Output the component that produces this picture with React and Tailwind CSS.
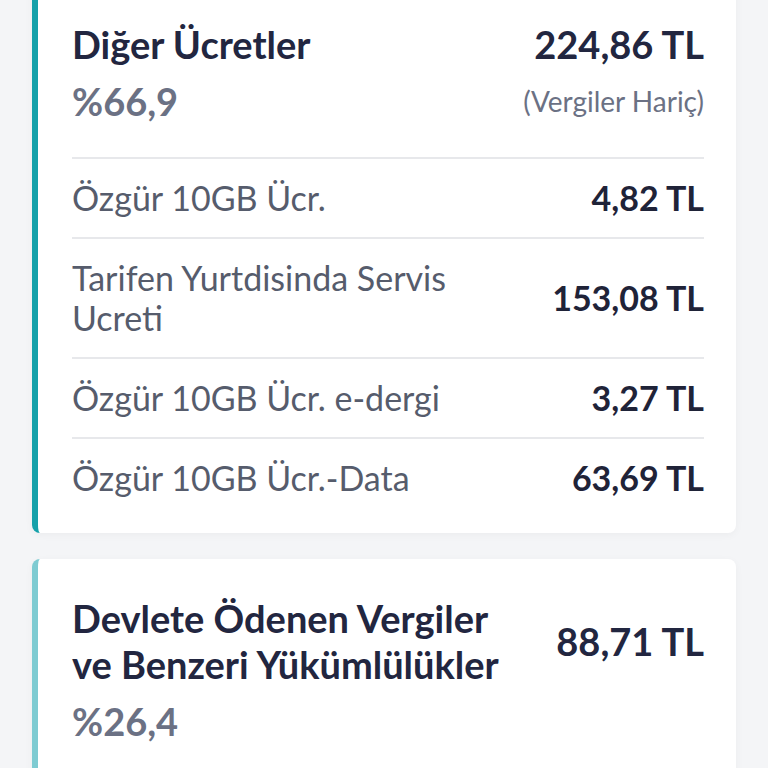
export default function App() {
  const rows = [
    { label: "Özgür 10GB Ücr.", value: "4,82 TL" },
    { label: "Tarifen Yurtdisinda Servis Ucreti", value: "153,08 TL" },
    { label: "Özgür 10GB Ücr. e-dergi", value: "3,27 TL" },
    { label: "Özgür 10GB Ücr.-Data", value: "63,69 TL" },
  ];
  return (
    <div
      className="min-h-[768px] h-[768px] overflow-hidden bg-[#f4f5f7] px-8"
      style={{ fontFamily: "Lato, 'Noto Sans', sans-serif" }}
    >
      <div className="-mt-[15px] rounded-lg border-l-[6px] border-[#15a1aa] bg-white pl-[34px] pr-8 pt-9 pb-4 shadow-[0_2px_8px_rgba(0,0,0,0.04)]">
        <div className="flex items-center justify-between">
          <div className="text-[38px] font-bold leading-[46px] text-[#222640]">Diğer Ücretler</div>
          <div className="text-[38px] font-bold leading-[46px] text-[#222640]">224,86 TL</div>
        </div>
        <div className="mt-3 flex items-center justify-between">
          <div className="text-[38px] font-bold leading-[44px] text-[#6b7184]">%66,9</div>
          <div className="text-[28px] leading-[44px] text-[#6b7184]">(Vergiler Hariç)</div>
        </div>
        <div className="mt-[34px]">
          {rows.map((r) => (
            <div key={r.label}>
              <div className="h-[2px] bg-[#e7e8eb]" />
              <div className="flex items-center justify-between gap-10 py-[19px]">
                <div className="flex-1 text-[34px] leading-[40px] text-[#565c6c]">{r.label}</div>
                <div className="shrink-0 text-[34px] font-bold leading-[40px] text-[#1f2338]">{r.value}</div>
              </div>
            </div>
          ))}
        </div>
      </div>
      <div className="mt-[26px] rounded-lg border-l-[6px] border-[#7ecbd2] bg-white pl-[34px] pr-8 pt-9 pb-10 shadow-[0_2px_8px_rgba(0,0,0,0.04)]">
        <div className="flex items-center justify-between gap-8">
          <div className="text-[38px] font-bold leading-[46px] text-[#222640]">
            Devlete Ödenen Vergiler
            <br />
            ve Benzeri Yükümlülükler
          </div>
          <div className="shrink-0 text-[38px] font-bold leading-[46px] text-[#222640]">88,71 TL</div>
        </div>
        <div className="mt-3 text-[38px] font-bold leading-[44px] text-[#6b7184]">%26,4</div>
      </div>
    </div>
  );
}
